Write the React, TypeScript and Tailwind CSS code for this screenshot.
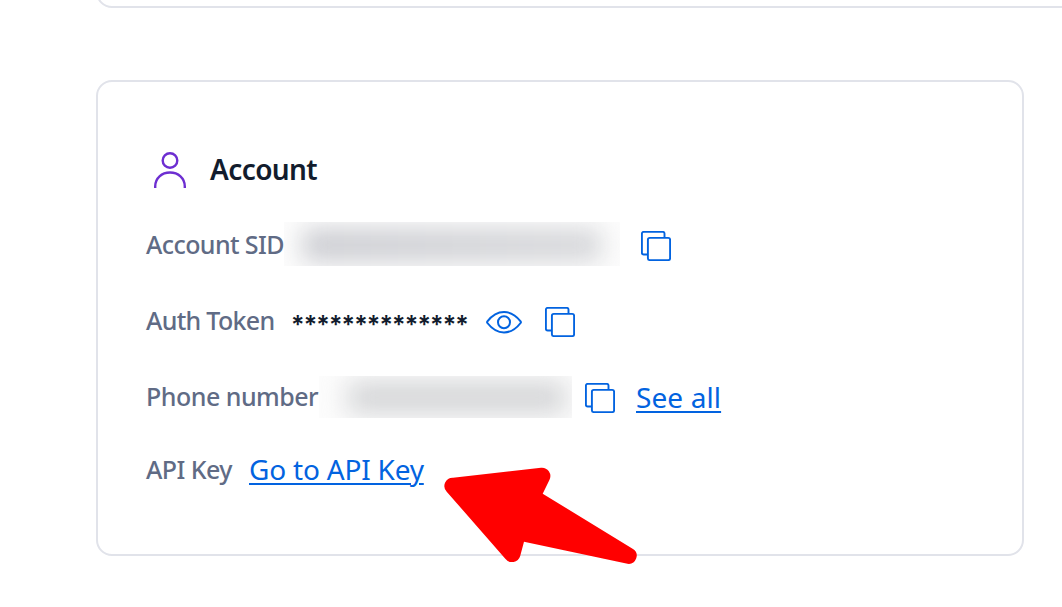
import React from "react";

const labelClass =
  "block shrink-0 whitespace-nowrap text-[25px] leading-[36px] font-medium text-[#606b85]";
const linkClass =
  "shrink-0 whitespace-nowrap text-[28px] leading-[36px] text-[#0263e0] underline decoration-2 underline-offset-[3px]";

function UserIcon() {
  return (
    <svg className="block h-[40px] w-[40px] shrink-0" viewBox="0 0 40 40" fill="none" stroke="#6d2ed1" strokeWidth="2.4">
      <circle cx="20" cy="10.5" r="7.3" />
      <path d="M5.2 38v-1.6C5.2 28 11.800 22.500 20 22.500S34.800 28 34.800 36.400V38" />
    </svg>
  );
}

function CopyIcon() {
  return (
    <svg className="block h-[30px] w-[30px] shrink-0" viewBox="0 0 30 30" fill="none" stroke="#0263e0" strokeWidth="1.9">
      <path d="M6.500 23.500H2.600A1.700 1.700 0 0 1 .9 21.800V2.600A1.700 1.700 0 0 1 2.600.9h19.200a1.700 1.700 0 0 1 1.700 1.700V6.500" />
      <rect x="6.900" y="6.900" width="22.200" height="22.200" rx="1.900" />
    </svg>
  );
}

function EyeIcon() {
  return (
    <svg className="block h-[24px] w-[36px] shrink-0" viewBox="0 0 36 24" fill="none" stroke="#0263e0" strokeWidth="2">
      <path d="M1.400 11.400C6.200 5.200 11.700 2 18 2s11.800 3.200 16.600 9.400q.6.800 0 1.600C29.800 19.200 24.300 22.400 18 22.400S6.200 19.200 1.400 13q-.6-.8 0-1.600Z" />
      <circle cx="18" cy="12.200" r="6" />
    </svg>
  );
}

function Pointer() {
  return (
    <svg className="absolute top-[462px] left-[440px] h-[106px] w-[202px]" viewBox="440 462 202 106">
      <path
        fill="#ff0000"
        d="M453 477.700 541 467.700A8.500 8.500 0 0 1 549.400 480L542.700 493.700 633 549A8.100 8.100 0 0 1 627.500 563.800L524 541.700 520.200 556A8.500 8.500 0 0 1 505.300 558.700L446.700 491.700A8.300 8.300 0 0 1 453 477.700Z"
      />
    </svg>
  );
}

export default function App() {
  return (
    <div className="relative h-[607px] w-[1062px] overflow-hidden bg-white font-['Noto_Sans',sans-serif]">
      <div className="ml-[96px] h-[8px] w-[990px] overflow-hidden">
        <div className="-mt-[32px] h-[40px] rounded-[16px] border-2 border-[#e1e3ea]" />
      </div>
      <section className="mt-[72px] ml-[96px] h-[476px] w-[928px] rounded-[16px] border-2 border-[#e1e3ea] pt-[68px] pl-[48px]">
        <header className="flex h-[40px] items-center pl-[4px]">
          <UserIcon />
          <h2 className="mb-[2px] ml-[20px] text-[28px] leading-[36px] font-semibold tracking-[-0.6px] text-[#121c2d]">Account</h2>
        </header>
        <div className="mt-[32px] flex h-[44px] items-center">
          <div className="w-[138px] shrink-0"><span className={`${labelClass} tracking-[-0.6px]`}>Account SID</span></div>
          <div className="h-[44px] w-[336px] overflow-hidden bg-[#fcfcfc]">
            <div className="mt-[7px] ml-[19px] h-[32px] w-[298px] bg-gradient-to-r from-[#cbccd1] to-[#d6d7da] blur-[12px]" />
          </div>
          <div className="mt-[4px] ml-[21px]"><CopyIcon /></div>
        </div>
        <div className="mt-[34px] flex h-[42px] items-center">
          <div className="mb-[2px] w-[145px] shrink-0"><span className={`${labelClass} tracking-[-0.7px]`}>Auth Token</span></div>
          <span className="w-[195px] shrink-0 pt-[8px] font-['Inter',sans-serif] text-[25px] leading-[36px] font-semibold tracking-[-0.85px] text-[#121c2d]">**************</span>
          <div className="mt-[2px]"><EyeIcon /></div>
          <div className="mt-[2px] ml-[23px]"><CopyIcon /></div>
        </div>
        <div className="mt-[34px] flex h-[42px] items-center">
          <div className="mb-[2px] w-[173px] shrink-0"><span className={`${labelClass} tracking-[-0.5px]`}>Phone number</span></div>
          <div className="h-[42px] w-[253px] overflow-hidden bg-[#fcfcfc]">
            <div className="mt-[6px] ml-[29px] h-[31px] w-[218px] bg-[#d3d4d6] blur-[13px]" />
          </div>
          <div className="mt-[2px] ml-[13px]"><CopyIcon /></div>
          <a className={`${linkClass} ml-[21px] tracking-[0.1px]`}>See all</a>
        </div>
        <div className="mt-[31px] flex h-[42px] items-center pb-[2px]">
          <div className="mb-[1px] w-[103px] shrink-0"><span className={`${labelClass} tracking-[-0.55px]`}>API Key</span></div>
          <a className={`${linkClass} tracking-[-0.2px]`}>Go to API Key</a>
        </div>
      </section>
      <Pointer />
    </div>
  );
}
